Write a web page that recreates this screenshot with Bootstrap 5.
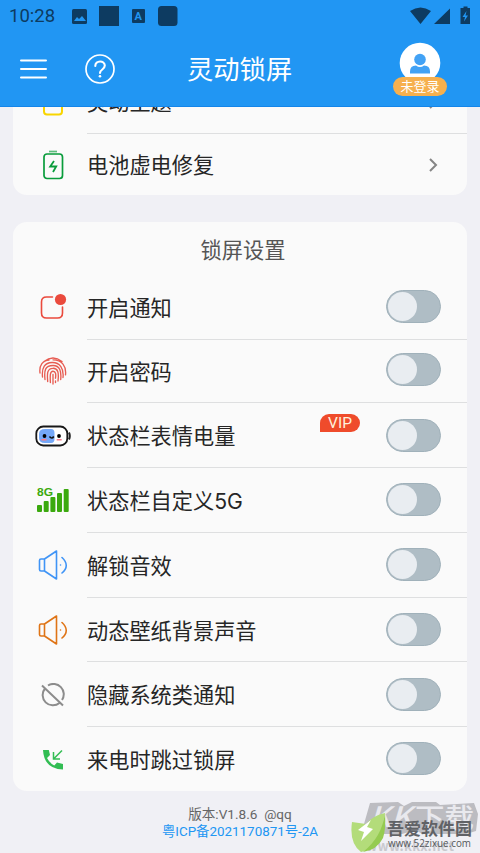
<!DOCTYPE html>
<html lang="zh-CN">
<head>
<meta charset="utf-8">
<meta name="viewport" content="width=device-width, initial-scale=1">
<title>灵动锁屏</title>
<link href="https://cdn.jsdelivr.net/npm/bootstrap@5.3.0/dist/css/bootstrap.min.css" rel="stylesheet">
<style>
body{height:853px;overflow:hidden;background:#f0f0f5;font-family:Roboto,"Noto Sans CJK SC",sans-serif;color:#262626}
svg{display:block;flex:none}
.top{height:107px;background:#2196f3;border-bottom:1px solid #1485e9;z-index:2}
.status{height:32px;padding:0 9px;color:#0d3b61;font-size:18.5px}
.status .clock{width:63px;line-height:34px}
.bar{height:74px;padding:0 33px 0 20px}
.title{font-size:26.3px;line-height:72px;margin-left:72px;padding-top:1px}
.user{width:54px;height:54px;margin-left:auto}
.login{width:54px;height:19px;left:0;bottom:0;background:#f6b04e;font-size:13px;line-height:19px;border-radius:10px}
.scroll{height:746px;overflow:hidden}
.panel{width:454px;background:#fafafa;border-radius:14px}
.first{margin-top:-38px}
.settings{margin-top:27px}
.item{height:64.8px;padding-left:21px}
.item.short{height:63.4px}
.item.end{height:61.2px}
.settings .end{height:63.4px}
.ico{width:38px;margin-right:15px}
.cell{font-size:21.2px;border-bottom:1.5px solid #dedfe0;padding-right:26px}
.label{padding-top:4px}
.latin{font-family:Inter,sans-serif}
.end .cell{border-bottom:0}
.head{height:53px;font-size:21.2px;line-height:58px;color:#555;padding-left:6px}
.switch{width:55px;height:33px;border-radius:17px;background:#afbdc5;border:1px solid #a0b1ba;padding:1px}
.short .switch{margin-bottom:2px}
.knob{width:29px;height:29px;border-radius:50%;background:#e9edf1}
.vip{width:40px;height:18px;border-radius:9px 9px 9px 0;background:#ef4b2b;color:#fff1dc;font:400 15.5px/18px Roboto,sans-serif;margin:0 26px 24px auto}
.foot{font-size:13.6px;line-height:18px;color:#666;padding-top:14px}
.foot a{color:#2196f3;font-size:13.4px}
.mark-box{right:0;bottom:0;width:130px;height:54px;overflow:hidden}
</style>
<script src="https://cdn.jsdelivr.net/npm/bootstrap@5.3.0/dist/js/bootstrap.bundle.min.js"></script>
</head>
<body>
<header class="top position-relative">
  <div class="status d-flex align-items-center">
    <span class="clock">10:28</span>
    <svg width="110" height="22" viewBox="72 5 110 22" fill="#0d3b61"><rect x="72" y="9" width="15" height="15" rx="1.5"/><path d="M74 21l3-4 2 2 3-3 4 5z" fill="#2196f3"/><path d="M99 6h20v20H99z"/><rect x="132" y="9" width="13" height="14" rx="1"/><text x="134.500" y="20" font-size="11" font-weight="700" fill="#2196f3">A</text><rect x="158" y="6" width="19.500" height="20" rx="3.500"/></svg>
    <svg class="ms-auto" width="61" height="20" viewBox="411 6 61 20" fill="#0d3b61"><path d="M411 11q10.500-7 21 0L421.500 24zM435 24L451 8.500V24z"/><path d="M461.500 8h3V6.500h4V8h2.500v16h-9.500z"/><path d="M467.500 11l-4 6h2.500l-1 4.500 4-6h-2.500z" fill="#2196f3"/></svg>
  </div>
  <div class="bar d-flex align-items-center text-white">
    <svg width="27" height="22" stroke="#fff" stroke-width="2" stroke-linecap="round"><path d="M1 2.500h25M1 11h25M1 19.500h25"/></svg>
    <svg width="68" height="32" viewBox="-37 0 68 32" fill="none" stroke="#fff" stroke-width="1.700"><circle cx="16" cy="16" r="14"/><path d="M11.300 13c0-6 9.500-6 9.500-.4 0 4-4.800 3.800-4.800 7.400" stroke-width="2.100" stroke-linecap="round"/><circle cx="16" cy="23.300" r="1.300" fill="#fff" stroke="none"/></svg>
    <h1 class="title mb-0 fw-normal">灵动锁屏</h1>
    <div class="user position-relative">
      <svg width="54" height="42" viewBox="0 0 54 42"><circle cx="27" cy="21" r="20.300" fill="#fff"/><circle cx="27" cy="17.500" r="5.800" fill="#42a2f5"/><path d="M17 31.500v-2q0-6 6-6 4 3 8 0 6 0 6 6v2z" fill="#42a2f5"/></svg>
      <span class="login position-absolute text-center">未登录</span>
    </div>
  </div>
</header>
<main class="scroll">
  <section class="panel first mx-auto">
    <div class="item d-flex">
      <div class="ico d-flex align-items-center justify-content-center"><svg width="22" height="30" viewBox="0 0 22 30" fill="none" stroke="#f8d500" stroke-width="2"><rect x="2" y="4" width="18" height="24.500" rx="3"/></svg></div>
      <div class="cell flex-fill d-flex align-items-center"><span class="label">灵动主题</span><svg class="ms-auto" width="14" height="16" viewBox="0 0 14 16" fill="none" stroke="#858585" stroke-width="2"><path d="M3 3l6 6-6 6"/></svg></div>
    </div>
    <div class="item end d-flex">
      <div class="ico d-flex align-items-center justify-content-center"><svg width="22" height="32" viewBox="0 0 22 32" fill="none" stroke="#099c3b" stroke-width="1.700"><rect x="2" y="6" width="18.500" height="24.500" rx="3"/><path d="M7 3.500h8" stroke-opacity=".65"/><path d="M12 13L8.200 18.500h6l-3.200 5.500" stroke-width="1.800"/></svg></div>
      <div class="cell flex-fill d-flex align-items-center"><span class="label">电池虚电修复</span><svg class="ms-auto" width="14" height="16" viewBox="0 0 14 16" fill="none" stroke="#858585" stroke-width="2"><path d="M3 3l6 6-6 6"/></svg></div>
    </div>
  </section>
  <section class="panel settings mx-auto">
    <h2 class="head mb-0 text-center fw-normal">锁屏设置</h2>
    <div class="item d-flex">
      <div class="ico d-flex align-items-center justify-content-center"><svg width="28" height="28" viewBox="0 0 28 28" fill="none" stroke="#ea4a3d" stroke-width="1.600" stroke-linecap="round"><path d="M13.500 4H7.500q-5 0-5 5v11q0 5 5 5h11q5 0 5-5v-6"/><circle cx="21.500" cy="6.500" r="5.600" fill="#ea4a3d" stroke="none"/></svg></div>
      <div class="cell flex-fill d-flex align-items-center"><span class="label">开启通知</span><div class="switch ms-auto"><div class="knob"></div></div></div>
    </div>
    <div class="item short d-flex">
      <div class="ico d-flex align-items-center justify-content-center"><svg width="28" height="28" viewBox="0 0 28 28" fill="none" stroke="#e75c52" stroke-width="1.350" stroke-linecap="round"><path d="M5 4.500Q14-2.500 23 4.500M1 16C0 8 4 3.500 10 3M14 2.800c9 0 13.500 6.500 12.500 15M3.500 20C2.500 10 6 5.700 13 5.500c8-.2 12 6 11 15M6 22.500c-1-9 0-14 8-14 7 0 8.500 6 7.700 14M8.700 24.500c-.7-8-.7-13 5.300-13.200 5-.1 6 4.200 5 12.700M11.400 25.500c-.4-7-.4-11.300 2.600-11.300s3 3.500 2.500 7M14 17.500v9.500M16.500 24v1.500"/></svg></div>
      <div class="cell flex-fill d-flex align-items-center"><span class="label">开启密码</span><div class="switch ms-auto"><div class="knob"></div></div></div>
    </div>
    <div class="item d-flex">
      <div class="ico d-flex align-items-center justify-content-center"><svg width="36" height="22" viewBox="0 0 36 22"><rect x="1.300" y="1.500" width="31" height="19" rx="7" fill="#fff" stroke="#181818" stroke-width="1.800"/><path d="M10 4h6q3.500 0 3.500 4v6q0 4-3.500 4h-6q-6 0-6-5V9q0-5 6-5z" fill="#75a8f8"/><circle cx="9.500" cy="11" r="1.900"/><circle cx="24" cy="11" r="1.900"/><path d="M14.500 11.500q2.300 3 4.300 0" fill="none" stroke="#111" stroke-width="1.600"/><path d="M6.500 14.700h5M21.700 14.700h5" stroke="#f77e8c" stroke-width="1.500"/><path d="M34 7.500q1.600 3.500 0 7" fill="none" stroke="#222" stroke-width="2"/></svg></div>
      <div class="cell flex-fill d-flex align-items-center"><span class="label">状态栏表情电量</span><span class="vip text-center">VIP</span><div class="switch"><div class="knob"></div></div></div>
    </div>
    <div class="item d-flex">
      <div class="ico d-flex align-items-center justify-content-center"><svg width="34" height="28" viewBox="0 0 34 28" fill="#3ba90e"><text x="1" y="9.500" font-family="Liberation Sans,sans-serif" font-weight="700" font-size="11" textLength="16" lengthAdjust="spacingAndGlyphs">8G</text><rect x="1" y="19" width="5" height="7" rx="1"/><rect x="7.700" y="15" width="5" height="11" rx="1"/><rect x="14.400" y="11" width="5" height="15" rx="1"/><rect x="21" y="7" width="5" height="19" rx="1"/><rect x="27.700" y="3" width="5" height="23" rx="1"/></svg></div>
      <div class="cell flex-fill d-flex align-items-center"><span class="label">状态栏自定义<span class="latin">5G</span></span><div class="switch ms-auto"><div class="knob"></div></div></div>
    </div>
    <div class="item d-flex">
      <div class="ico d-flex align-items-center justify-content-center"><svg width="30" height="30" viewBox="0 0 30 30" fill="none" stroke="#3f94f6" stroke-width="1.600" stroke-linejoin="round" stroke-linecap="round"><path d="M6.500 9L18.500 1v28L6.500 21zM3 9h3.500v12H3q-1.500 0-1.500-1.500v-9Q1.500 9 3 9zM24 7.500q8.500 8 0 15.500"/><circle cx="22.500" cy="15" r=".8" fill="#3f94f6" stroke="none"/></svg></div>
      <div class="cell flex-fill d-flex align-items-center"><span class="label">解锁音效</span><div class="switch ms-auto"><div class="knob"></div></div></div>
    </div>
    <div class="item d-flex">
      <div class="ico d-flex align-items-center justify-content-center"><svg width="30" height="30" viewBox="0 0 30 30" fill="none" stroke="#df7416" stroke-width="1.600" stroke-linejoin="round" stroke-linecap="round"><path d="M6.500 9L18.500 1v28L6.500 21zM3 9h3.500v12H3q-1.500 0-1.500-1.500v-9Q1.500 9 3 9zM24 7.500q8.500 8 0 15.500"/><circle cx="22.500" cy="15" r=".8" fill="#df7416" stroke="none"/></svg></div>
      <div class="cell flex-fill d-flex align-items-center"><span class="label">动态壁纸背景声音</span><div class="switch ms-auto"><div class="knob"></div></div></div>
    </div>
    <div class="item d-flex">
      <div class="ico d-flex align-items-center justify-content-center"><svg width="24" height="24" viewBox="0 0 24 24" fill="none" stroke="#8c8c8c" stroke-width="2"><path d="M7 2.500A10.300 10.300 0 0 1 21 17M18.500 20A10.300 10.300 0 0 1 4 5.500M1 2.500l21 20"/></svg></div>
      <div class="cell flex-fill d-flex align-items-center"><span class="label">隐藏系统类通知</span><div class="switch ms-auto"><div class="knob"></div></div></div>
    </div>
    <div class="item end d-flex">
      <div class="ico d-flex align-items-center justify-content-center"><svg width="22" height="22" viewBox="0 0 22 22"><path d="M1 2h5.800l1.200 5-3 3q2.500 5 7.300 7.500l2.700-3 6 1.400V21.500Q2 21 1 2z" fill="#32bd53"/><path d="M20 2.500l-8 8M11.500 4v7H18" fill="none" stroke="#32bd53" stroke-width="1.500"/></svg></div>
      <div class="cell flex-fill d-flex align-items-center"><span class="label">来电时跳过锁屏</span><div class="switch ms-auto"><div class="knob"></div></div></div>
    </div>
  </section>
  <footer class="foot text-center"><div>版本:V1.8.6&nbsp; @qq</div><a class="text-decoration-none d-block" href="#">粤ICP备2021170871号-2A</a></footer>
</main>
<div class="mark-box position-absolute">
<svg width="130" height="54" viewBox="350 799 130 54" font-family="Noto Sans CJK SC,sans-serif">
  <path d="M370 803l28-1 6 4 8-4h24l4 3 34-2 4 11-2 17-10 3h-44l-6-4-14 4h-34l-4-10z" fill="#bcbcc1"/>
  <g fill="#e9e9ee"><text x="369" y="827" font-size="28" font-weight="500" font-style="italic" textLength="43" lengthAdjust="spacingAndGlyphs">KK</text><text x="415" y="828" font-size="27" font-weight="500" textLength="59" lengthAdjust="spacingAndGlyphs">下载</text></g>
  <text x="366" y="851" font-size="13" font-weight="700" fill="#c9c9ce" textLength="88">www.kkx.net</text>
  <path d="M385 813q-13 3-19 11l-14-2q-3 21 9 30 18-5 20-17z" fill="#b3dc7a"/><path d="M385 813q-3 24-22 39 14-2 20-14 3-8 2-25z" fill="#95cb50"/><path d="M371 820l-13 10 6 2-3 9 12-12-6-2z" fill="#fff"/>
  <text x="387" y="835" font-size="17" font-weight="700" fill="#606266" textLength="85">吾爱软件园</text>
  <text x="388" y="847" font-size="10.500" font-family="Open Sans,sans-serif" font-weight="400" fill="#55585b" textLength="83" lengthAdjust="spacingAndGlyphs">www.52zixue.com</text>
</svg>
</div>
</body>
</html>
